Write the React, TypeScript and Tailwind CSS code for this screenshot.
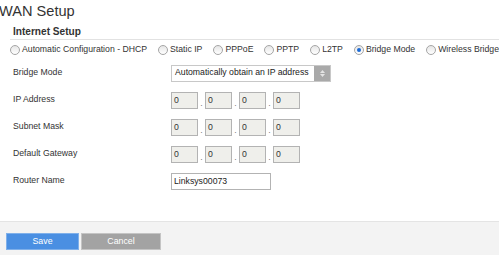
import React from "react";

const MODES = [
  "Automatic Configuration - DHCP",
  "Static IP",
  "PPPoE",
  "PPTP",
  "L2TP",
  "Bridge Mode",
  "Wireless Bridge",
];

function Radio({ checked }: { checked?: boolean }) {
  return (
    <span className="w-[10px] h-[10px] rounded-full border border-[#a5a5a5] bg-gradient-to-b from-[#e6e6e6] to-white flex items-center justify-center shrink-0">
      {checked && <span className="w-[4px] h-[4px] rounded-full bg-[#1a6ad6]" />}
    </span>
  );
}

function IpFields() {
  return (
    <div className="flex items-end">
      {[0, 1, 2, 3].map((i) => (
        <React.Fragment key={i}>
          {i > 0 && <span className="w-[7px] text-center text-[#777] leading-[11px]">.</span>}
          <div className="w-[27px] h-[17px] border border-[#b3b3b3] bg-[#efefeb] text-[#333] pl-[2px] leading-[15px]">
            0
          </div>
        </React.Fragment>
      ))}
    </div>
  );
}

function Row({ label, children }: { label: string; children: React.ReactNode }) {
  return (
    <div className="flex items-center h-[18px]">
      <div className="w-[171px] pl-[13px] text-[#333]">{label}</div>
      {children}
    </div>
  );
}

export default function App() {
  return (
    <div
      className="w-[499px] h-[255px] bg-white flex flex-col text-[8.7px] text-[#333] overflow-hidden"
      style={{ fontFamily: "Arial, 'Liberation Sans', sans-serif" }}
    >
      <div className="text-[14.6px] leading-[18px] pt-[2px] text-[#333] -ml-[1px]">WAN Setup</div>
      <div className="ml-[10px] mt-[6px] border-b border-[#e2e2e2] pl-[3px] pb-[1px] font-bold text-[10.1px] leading-[12px]">
        Internet Setup
      </div>
      <div className="flex items-center pl-[10px] mt-[4px] h-[12px]">
        {MODES.map((m, i) => (
          <label key={m} className="flex items-center gap-[2px] mr-[11px] whitespace-nowrap">
            <Radio checked={i === 5} />
            <span>{m}</span>
          </label>
        ))}
      </div>
      <div className="flex flex-col gap-[9px] mt-[8px]">
        <Row label="Bridge Mode">
          <div className="w-[160px] h-[17px] border border-[#c8c8c8] bg-white flex items-center">
            <span className="flex-1 pl-[3px] text-[#222] whitespace-nowrap">Automatically obtain an IP address</span>
            <span className="w-[16px] h-[15px] bg-[#a9a9a9] flex flex-col items-center justify-center gap-[1px]">
              <svg width="5" height="3" viewBox="0 0 5 3"><path d="M0 3 L2.5 0 L5 3Z" fill="#e4e4e4" /></svg>
              <svg width="5" height="3" viewBox="0 0 5 3"><path d="M0 0 L2.5 3 L5 0Z" fill="#e4e4e4" /></svg>
            </span>
          </div>
        </Row>
        <Row label="IP Address"><IpFields /></Row>
        <Row label="Subnet Mask"><IpFields /></Row>
        <Row label="Default Gateway"><IpFields /></Row>
        <Row label="Router Name">
          <div className="w-[100px] h-[17px] border border-[#b3b3b3] bg-white pl-[2px] leading-[15px] text-[#222]">
            Linksys00073
          </div>
        </Row>
      </div>
      <div className="mt-auto h-[34px] bg-[#f3f3f3] border-t border-[#e4e4e4] flex items-start pt-[11px] pl-[6px] gap-[2px]">
        <button className="w-[73px] h-[17px] bg-[#4a8fe2] border border-[#7fb0ea] text-white text-[8.8px] leading-[15px]">
          Save
        </button>
        <button className="w-[80px] h-[17px] bg-[#a3a3a3] border border-[#c4c4c4] text-white text-[8.8px] leading-[15px]">
          Cancel
        </button>
      </div>
    </div>
  );
}
